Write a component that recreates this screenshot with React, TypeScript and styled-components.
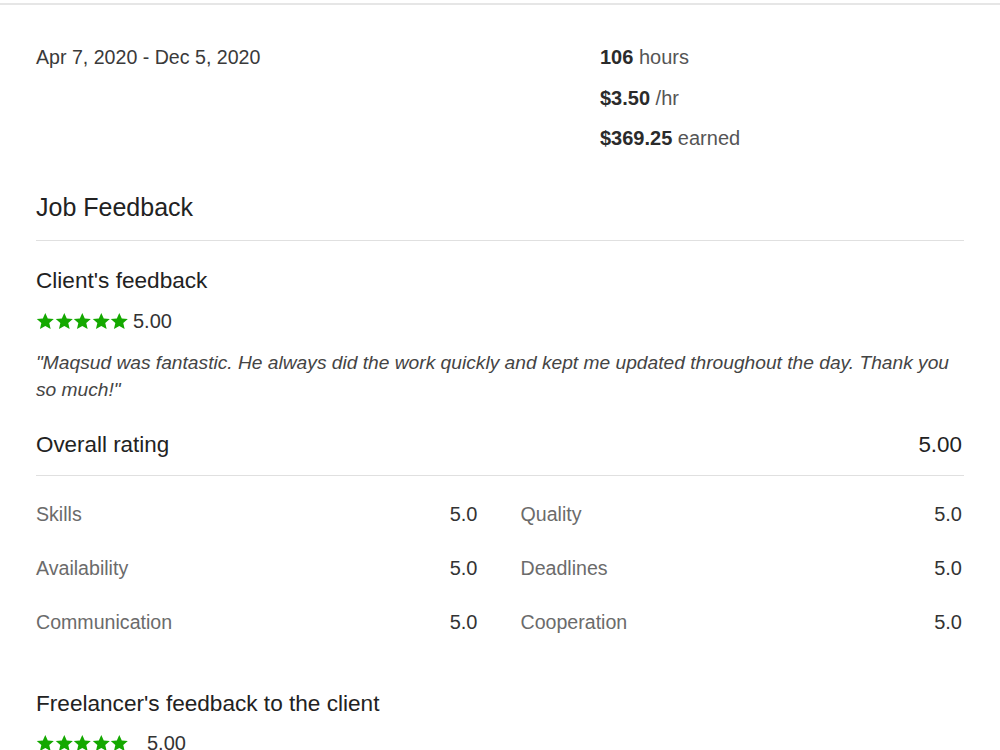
import React from "react";
import styled, { createGlobalStyle } from "styled-components";

const Global = createGlobalStyle`
  html, body { margin: 0; padding: 0; background: #fff; }
  body { font-family: "Liberation Sans", Arial, sans-serif; color: #222; }
  * { box-sizing: border-box; }
`;

const Page = styled.div`
  width: 1000px;
  min-height: 750px;
  overflow: hidden;
`;

const TopRule = styled.div`
  height: 5px;
  border-bottom: 2px solid #e6e6e6;
`;

const Content = styled.div`
  padding: 0 36px;
`;

const Summary = styled.div`
  display: grid;
  grid-template-columns: 564px 1fr;
  margin-top: 40px;
`;

const DateRange = styled.div`
  font-size: 19.6px;
  line-height: 24px;
  color: #3a3a3a;
`;

const Stats = styled.div`
  display: flex;
  flex-direction: column;
  gap: 16.5px;
`;

const Stat = styled.div`
  font-size: 20px;
  line-height: 24px;
  color: #555;
  b { font-weight: 700; color: #2b2b2b; }
`;

const SectionTitle = styled.h2`
  margin: 42px 0 0;
  padding-bottom: 18px;
  border-bottom: 1px solid #e0e0e0;
  font-size: 25px;
  line-height: 30px;
  font-weight: 400;
  color: #222;
`;

const SubTitle = styled.h3<{ $gap: number }>`
  margin: ${(p) => p.$gap}px 0 0;
  font-size: 22.6px;
  line-height: 28px;
  font-weight: 400;
  color: #222;
`;

const RatingLine = styled.div<{ $gap: number; $valueGap: number }>`
  display: flex;
  align-items: center;
  gap: ${(p) => p.$valueGap}px;
  margin-top: ${(p) => p.$gap}px;
  height: 24px;
`;

const StarsWrap = styled.div`
  display: flex;
`;

const Score = styled.span`
  font-size: 20px;
  line-height: 24px;
  color: #333;
`;

const Quote = styled.p`
  margin: 15.5px 0 0;
  font-size: 19.2px;
  line-height: 27px;
  font-style: italic;
  color: #444;
`;

const OverallRow = styled.div`
  display: flex;
  justify-content: space-between;
  align-items: center;
  margin-top: 28.5px;
  padding: 0 2px 16px 0;
  border-bottom: 1px solid #e0e0e0;
  font-size: 22.4px;
  line-height: 28px;
  color: #222;
`;

const Breakdown = styled.div`
  display: grid;
  grid-template-columns: 1fr 1fr;
  column-gap: 41px;
  margin-top: 11px;
`;

const BreakdownRow = styled.div`
  display: flex;
  justify-content: space-between;
  align-items: center;
  height: 54px;
  font-size: 19.6px;
  padding-right: 2px;
`;

const Label = styled.span`
  color: #6b6b6b;
`;

const Value = styled.span`
  color: #333;
  font-size: 20px;
`;

const Star = () => (
  <svg width="18.6" height="18.6" viewBox="0 0 24 24" fill="#14a800">
    <path d="M12 1.2l3.2 7.2 7.8.7-5.9 5.2 1.8 7.7L12 18l-6.9 4 1.8-7.7L1 9.1l7.8-.7z" />
  </svg>
);

const Stars = () => (
  <StarsWrap>
    {[0, 1, 2, 3, 4].map((i) => (
      <Star key={i} />
    ))}
  </StarsWrap>
);

const rows: [string, string][] = [
  ["Skills", "5.0"],
  ["Quality", "5.0"],
  ["Availability", "5.0"],
  ["Deadlines", "5.0"],
  ["Communication", "5.0"],
  ["Cooperation", "5.0"],
];

export default function App() {
  return (
    <Page>
      <Global />
      <TopRule />
      <Content>
        <Summary>
          <DateRange>Apr 7, 2020 - Dec 5, 2020</DateRange>
          <Stats>
            <Stat>
              <b>106</b> hours
            </Stat>
            <Stat>
              <b>$3.50</b> /hr
            </Stat>
            <Stat>
              <b>$369.25</b> earned
            </Stat>
          </Stats>
        </Summary>

        <SectionTitle>Job Feedback</SectionTitle>

        <SubTitle $gap={26}>Client's feedback</SubTitle>
        <RatingLine $gap={14} $valueGap={4}>
          <Stars />
          <Score>5.00</Score>
        </RatingLine>
        <Quote>
          "Maqsud was fantastic. He always did the work quickly and kept me updated throughout the day. Thank you
          so much!"
        </Quote>

        <OverallRow>
          <span>Overall rating</span>
          <span>5.00</span>
        </OverallRow>

        <Breakdown>
          {rows.map(([l, v]) => (
            <BreakdownRow key={l}>
              <Label>{l}</Label>
              <Value>{v}</Value>
            </BreakdownRow>
          ))}
        </Breakdown>

        <SubTitle $gap={41}>Freelancer's feedback to the client</SubTitle>
        <RatingLine $gap={13} $valueGap={18}>
          <Stars />
          <Score>5.00</Score>
        </RatingLine>
      </Content>
    </Page>
  );
}
